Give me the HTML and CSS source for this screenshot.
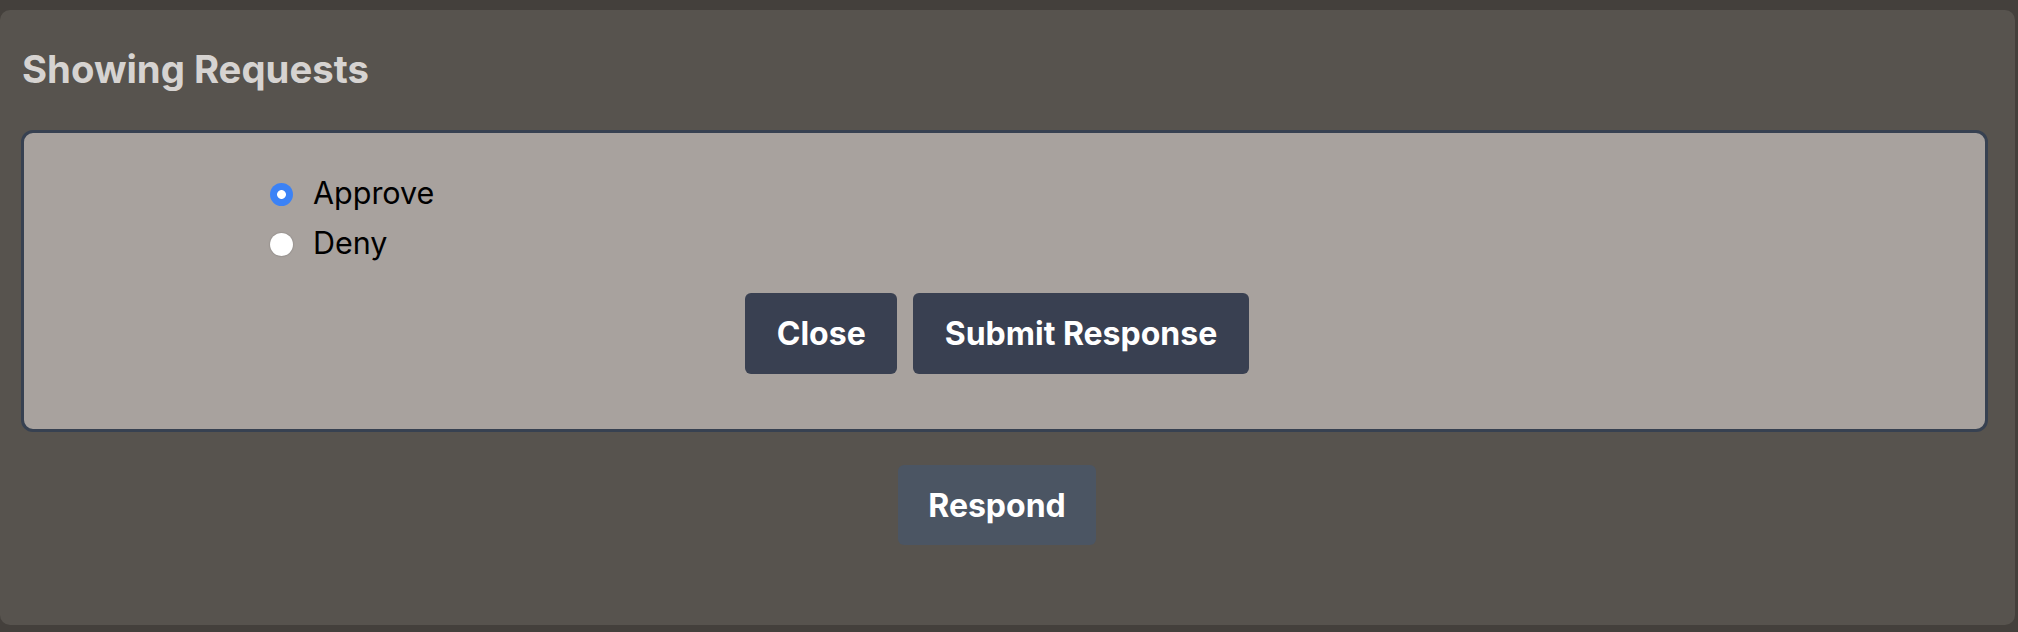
FILE: index.html
```html
<!DOCTYPE html>
<html lang="en">
<head>
<meta charset="utf-8">
<title>Showing Requests</title>
<link rel="stylesheet" href="styles.css">
</head>
<body>
<div class="page">
  <section class="card">
    <h2 class="title">Showing Requests</h2>
    <div class="panel">
      <div class="choices">
        <label class="choice"><input class="radio" type="radio" name="resp" value="approve" checked><span>Approve</span></label>
        <label class="choice"><input class="radio" type="radio" name="resp" value="deny"><span>Deny</span></label>
      </div>
      <div class="actions">
        <button class="btn btn-dark" type="button">Close</button>
        <button class="btn btn-dark" type="button">Submit Response</button>
      </div>
    </div>
    <div class="respond-row">
      <button class="btn btn-respond" type="button">Respond</button>
    </div>
  </section>
</div>
</body>
</html>
```

FILE: styles.css
```css
* { box-sizing: border-box; }
html, body { margin: 0; padding: 0; }
body {
  background: #44403c;
  font-family: Inter, "Noto Sans", sans-serif;
}
.page {
  padding: 10px 3px 7px 0;
  height: 632px;
}
.card {
  background: #57534e;
  border-radius: 10px;
  height: 615px;
  padding: 36px 27px 0 21px;
}
.title {
  margin: 0;
  font-size: 38.3px;
  line-height: 46px;
  font-weight: 700;
  color: #d6d3d1;
  padding-left: 1px;
}
.panel {
  margin-top: 38px;
  background: #a8a29e;
  border: 3px solid #374151;
  border-radius: 12px;
  padding: 34px 0 55px 0;
}
.choices {
  padding-left: 246px;
  display: flex;
  flex-direction: column;
}
.choice {
  display: flex;
  align-items: center;
  gap: 20px;
  height: 50px;
  font-family: Inter, "Noto Sans", sans-serif;
  font-size: 30.5px;
  color: #000;
}
.radio {
  appearance: none;
  -webkit-appearance: none;
  margin: 5px 0 0 0;
  width: 23px;
  height: 23px;
  border-radius: 50%;
  background: #fff;
  box-shadow: 0 0 1.5px rgba(0,0,0,0.35);
  flex: none;
}
.radio:checked {
  background: radial-gradient(circle, #ffffff 0 4px, #3b82f6 4.8px);
  box-shadow: none;
}
.actions {
  margin-top: 26px;
  display: flex;
  justify-content: center;
  gap: 16px;
  padding-right: 15px;
}
.btn {
  border: 0;
  font-family: Inter, "Noto Sans", sans-serif;
  font-weight: 700;
  font-size: 32px;
  color: #fff;
  height: 81px;
  border-radius: 6px;
  padding: 0 31.5px;
}
.btn-dark { background: #394051; }
.respond-row {
  margin-top: 33px;
  display: flex;
  justify-content: center;
  padding-right: 15px;
}
.btn-respond {
  background: #4b5563;
  height: 80px;
  padding: 0 30px;
}
```
